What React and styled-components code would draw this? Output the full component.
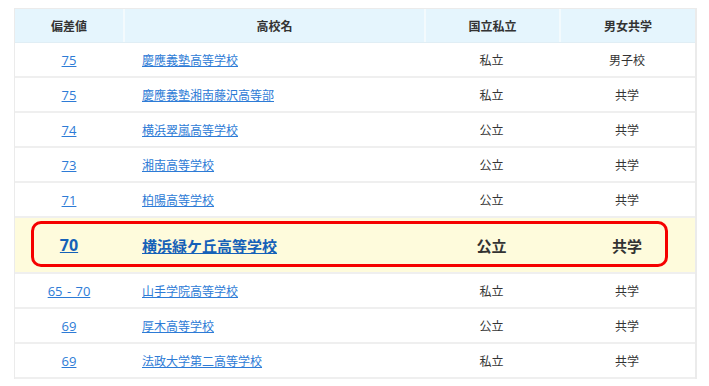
import React from "react";
import styled, { createGlobalStyle } from "styled-components";

const Global = createGlobalStyle`
  html, body { margin: 0; padding: 0; background: #fff; }
  body { font-family: "Noto Sans CJK JP", "Noto Sans", sans-serif; color: #333; }
`;

const Page = styled.div`
  padding: 8px 0 0 14px;
`;

const Table = styled.div`
  width: 680px;
  border: 1px solid #ebebeb;
  border-right-width: 2px;
  border-bottom: none;
`;

const Row = styled.div`
  position: relative;
  display: grid;
  grid-template-columns: 108px 301px 135px 136px;
  height: ${(p) => (p.$tall ? 56 : 35)}px;
  box-sizing: border-box;
  background: ${(p) => (p.$highlight ? "#fefbdc" : "#fff")};
  border-bottom: 2px solid #efefef;
`;

const HeadRow = styled(Row)`
  height: 34px;
  background: #e5f5fd;
  border-bottom: 1px solid #e0eef5;
`;

const HeadCell = styled.div`
  display: flex;
  align-items: center;
  justify-content: center;
  font-size: 12px;
  font-weight: bold;
  color: #333;
  & + & { border-left: 2px solid #f3fafd; }
`;

const Cell = styled.div`
  display: flex;
  align-items: center;
  justify-content: ${(p) => (p.$left ? "flex-start" : "center")};
  padding-left: ${(p) => (p.$left ? "19px" : "0")};
  font-size: ${(p) => (p.$big ? "15px" : "12px")};
  font-weight: ${(p) => (p.$big ? "bold" : "normal")};
  color: #333;
`;

const Link = styled.a`
  color: ${(p) => (p.$big ? "#1561b8" : "#2d7bd6")};
  text-decoration: underline;
  cursor: pointer;
`;

const Score = styled(Link)`
  font-family: "Open Sans", "Noto Sans", sans-serif;
  font-size: ${(p) => (p.$big ? "16px" : "13px")};
  word-spacing: 1px;
`;

const Marker = styled.div`
  position: absolute;
  left: 16px;
  right: 27px;
  top: 3px;
  bottom: 5px;
  border: 3px solid #f50000;
  border-radius: 10px;
  pointer-events: none;
`;

const rows = [
  ["75", "慶應義塾高等学校", "私立", "男子校"],
  ["75", "慶應義塾湘南藤沢高等部", "私立", "共学"],
  ["74", "横浜翠嵐高等学校", "公立", "共学"],
  ["73", "湘南高等学校", "公立", "共学"],
  ["71", "柏陽高等学校", "公立", "共学"],
  ["70", "横浜緑ケ丘高等学校", "公立", "共学", true],
  ["65 - 70", "山手学院高等学校", "私立", "共学"],
  ["69", "厚木高等学校", "公立", "共学"],
  ["69", "法政大学第二高等学校", "私立", "共学"],
];

export default function App() {
  return (
    <Page>
      <Global />
      <Table>
        <HeadRow>
          <HeadCell>偏差値</HeadCell>
          <HeadCell>高校名</HeadCell>
          <HeadCell>国立私立</HeadCell>
          <HeadCell>男女共学</HeadCell>
        </HeadRow>
        {rows.map(([score, name, type, gender, hl], i) => (
          <Row key={i} $tall={hl} $highlight={hl}>
            <Cell $big={hl}>
              <Score $big={hl}>{score}</Score>
            </Cell>
            <Cell $left $big={hl}>
              <Link $big={hl}>{name}</Link>
            </Cell>
            <Cell $big={hl}>{type}</Cell>
            <Cell $big={hl}>{gender}</Cell>
            {hl && <Marker />}
          </Row>
        ))}
      </Table>
    </Page>
  );
}
